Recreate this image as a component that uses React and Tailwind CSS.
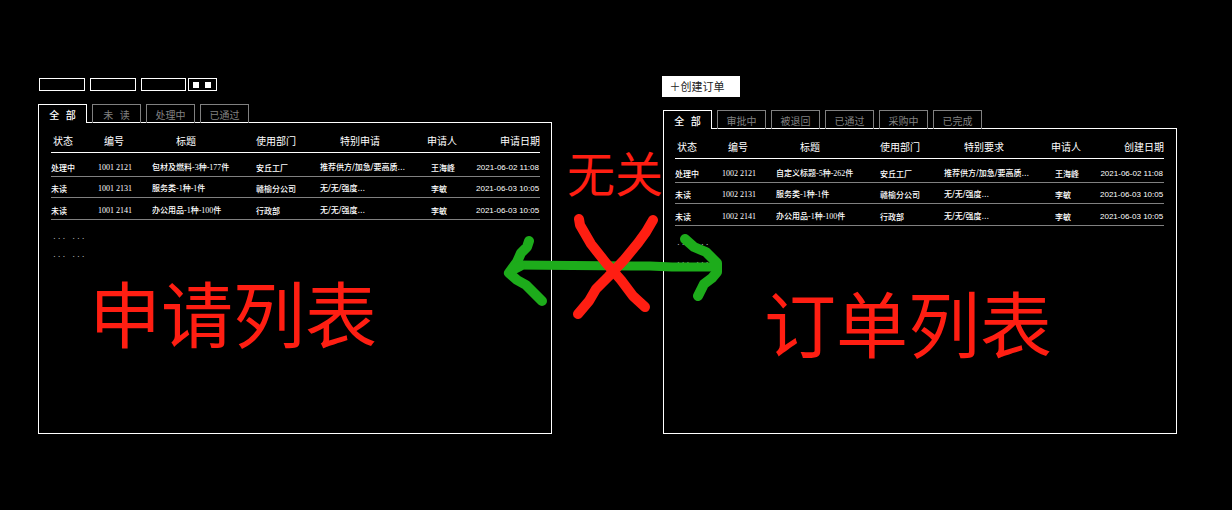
import React from "react";

const requests = {
  headers: ["状态", "编号", "标题", "使用部门", "特别申请", "申请人", "申请日期"],
  rows: [
    ["处理中", "1001 2121", "包材及燃料-3种-177件", "安丘工厂", "推荐供方/加急/要高质...", "王海峰", "2021-06-02 11:08"],
    ["未读", "1001 2131", "服务类-1种-1件", "赣榆分公司", "无/无/强度...", "李敏", "2021-06-03 10:05"],
    ["未读", "1001 2141", "办公用品-1种-100件", "行政部", "无/无/强度...", "李敏", "2021-06-03 10:05"],
  ],
};

const orders = {
  headers: ["状态", "编号", "标题", "使用部门", "特别要求", "申请人", "创建日期"],
  rows: [
    ["处理中", "1002 2121", "自定义标题-5种-262件", "安丘工厂", "推荐供方/加急/要高质...", "王海峰", "2021-06-02 11:08"],
    ["未读", "1002 2131", "服务类-1种-1件", "赣榆分公司", "无/无/强度...", "李敏", "2021-06-03 10:05"],
    ["未读", "1002 2141", "办公用品-1种-100件", "行政部", "无/无/强度...", "李敏", "2021-06-03 10:05"],
  ],
};

const headPadding = ["pl-0.5", "pl-1.5", "pl-6", "pl-0", "pl-5", "pl-0", "text-right"];

const cellStyles = [
  "font-['Noto_Sans_CJK_SC',sans-serif]",
  "font-['Liberation_Serif','Noto_Sans_CJK_SC',serif]",
  "font-['Liberation_Serif','Noto_Sans_CJK_SC',serif]",
  "font-['Noto_Sans_CJK_SC',sans-serif]",
  "font-['DejaVu_Sans','Noto_Sans_CJK_SC',sans-serif]",
  "pl-1 font-['Noto_Sans_CJK_SC',sans-serif]",
  "pr-px text-right font-['Liberation_Sans',sans-serif]",
];

const rowHeights = ["h-6", "h-[21px]", "h-[22px]"];

function Tabs({ items }) {
  return (
    <div role="tablist" className="relative z-10 -mb-px flex gap-[5px]">
      {items.map((item, i) => (
        <button
          key={item}
          type="button"
          role="tab"
          aria-selected={i === 0}
          className={
            "h-[19px] w-[49px] border border-b-0 pt-px text-[10px] leading-4 whitespace-pre " +
            (i === 0 ? "border-white bg-black font-medium text-white" : "border-[#808080] text-[#808080]")
          }
        >
          {item}
        </button>
      ))}
    </div>
  );
}

function ListTable({ data }) {
  return (
    <>
      <table className="w-full table-fixed border-collapse text-left whitespace-nowrap text-white">
        <colgroup>
          <col className="w-[47px]" />
          <col className="w-[54px]" />
          <col className="w-[104px]" />
          <col className="w-16" />
          <col className="w-[107px]" />
          <col className="w-[49px]" />
          <col />
        </colgroup>
        <thead>
          <tr className="h-[29px] border-b border-white">
            {data.headers.map((h, i) => (
              <th key={h} scope="col" className={"p-0 pt-2 align-middle text-[10px] leading-4 font-normal " + headPadding[i]}>
                {h}
              </th>
            ))}
          </tr>
        </thead>
        <tbody>
          {data.rows.map((row, r) => (
            <tr key={row[1]} className={"border-b border-[#808080] " + rowHeights[r]}>
              {row.map((cell, i) => (
                <td key={i} className={"p-0 pb-0.5 align-bottom text-[8px] leading-3 font-medium " + cellStyles[i]}>
                  {cell}
                </td>
              ))}
            </tr>
          ))}
        </tbody>
      </table>
      <div className="mt-2 pl-px font-['Liberation_Mono',monospace] text-[8px] leading-[18px] text-[#b0b0b0]">
        <p>... ...</p>
        <p>... ...</p>
      </div>
    </>
  );
}

function Annotations() {
  return (
    <div className="pointer-events-none absolute inset-0 z-20 overflow-hidden text-[#ff1e12]">
      <svg className="absolute top-0 left-0" width="1232" height="510" fill="none" strokeLinecap="round" strokeLinejoin="round" aria-hidden="true">
        <defs>
          <clipPath id="arrow-area">
            <rect x="0" y="0" width="722" height="510" />
          </clipPath>
        </defs>
        <g stroke="#1dac1b" clipPath="url(#arrow-area)">
          <path d="M516 265 L630 266 L650 266 L672 267 L717 267" strokeWidth="9" />
          <path d="M529 241 L527 247 L521 253 L517 262 L509 273 L517 280 L526 285 L534 293 L542 301" strokeWidth="10" />
          <path d="M685 239 L694 247 L706 252 L712 258 L717 263 L717 272 L712 278 L704 284 L698 296" strokeWidth="10" />
          <path d="M512 270 L520 266" strokeWidth="10" />
        </g>
        <g stroke="#ff1e12" strokeWidth="10">
          <path d="M579 219 L580 225 L591 244 L606 263 L621 280 L633 296 L645 307" />
          <path d="M653 220 L646 232 L638 243 L624 260 L608 277 L596 289 L589 301 L578 314" />
        </g>
      </svg>
      <p className="absolute top-[147px] left-[567px] text-[48px] leading-[48px]">无关</p>
      <p className="absolute top-[275px] left-[89px] text-[72px] leading-[72px]">申请列表</p>
      <p className="absolute top-[285px] left-[764px] text-[72px] leading-[72px]">订单列表</p>
    </div>
  );
}

export default function App() {
  return (
    <main className="relative min-h-screen bg-black font-['Noto_Sans_CJK_SC',sans-serif]">
      <div className="grid grid-cols-2 gap-[111px] pt-[76px] pr-[55px] pb-[76px] pl-[38px]">
        <section aria-label="申请列表" className="flex min-w-0 flex-col">
          <div className="mt-0.5 mb-[13px] flex gap-[5px] pl-px">
            <button type="button" aria-label="筛选一" className="h-[13px] w-[46px] border border-white" />
            <button type="button" aria-label="筛选二" className="h-[13px] w-[46px] border border-white" />
            <div className="flex gap-0.5">
              <button type="button" aria-label="筛选三" className="h-[13px] w-[45px] border border-white" />
              <button type="button" aria-label="视图" className="flex h-[13px] w-[29px] items-center justify-center gap-1.5 border border-white pr-0.5">
                <span className="size-1.5 bg-white" />
                <span className="size-1.5 bg-white" />
              </button>
            </div>
          </div>
          <Tabs items={["全   部", "未   读", "处理中", "已通过"]} />
          <div className="min-h-[312px] flex-1 border border-white pr-[11px] pl-3">
            <ListTable data={requests} />
          </div>
        </section>
        <section aria-label="订单列表" className="flex min-w-0 flex-col">
          <button type="button" className="-ml-px mb-[13px] h-[21px] w-[78px] bg-white pr-2 pb-0.5 text-[11px] leading-4 text-[#222]">
            ＋创建订单
          </button>
          <Tabs items={["全   部", "审批中", "被退回", "已通过", "采购中", "已完成"]} />
          <div className="min-h-[306px] flex-1 border border-white pr-3 pl-[11px]">
            <ListTable data={orders} />
          </div>
        </section>
      </div>
      <Annotations />
    </main>
  );
}
